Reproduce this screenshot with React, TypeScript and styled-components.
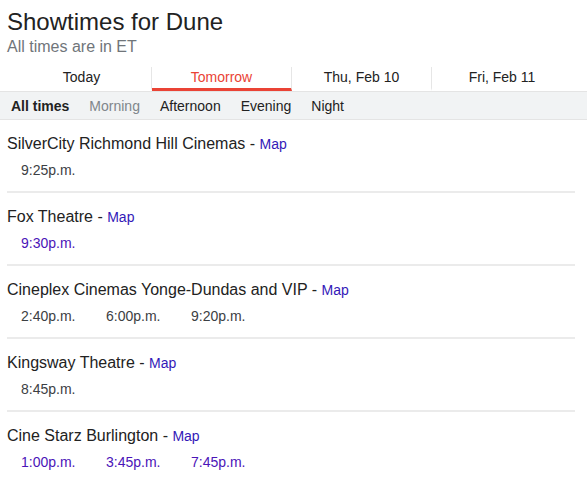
import styled, { createGlobalStyle } from "styled-components";

type Theater = { name: string; times: { t: string; visited?: boolean }[] };

const theaters: Theater[] = [
  { name: "SilverCity Richmond Hill Cinemas", times: [{ t: "9:25p.m." }] },
  { name: "Fox Theatre", times: [{ t: "9:30p.m.", visited: true }] },
  {
    name: "Cineplex Cinemas Yonge-Dundas and VIP",
    times: [{ t: "2:40p.m." }, { t: "6:00p.m." }, { t: "9:20p.m." }],
  },
  { name: "Kingsway Theatre", times: [{ t: "8:45p.m." }] },
  {
    name: "Cine Starz Burlington",
    times: [
      { t: "1:00p.m.", visited: true },
      { t: "3:45p.m.", visited: true },
      { t: "7:45p.m.", visited: true },
    ],
  },
];

const days = ["Today", "Tomorrow", "Thu, Feb 10", "Fri, Feb 11"];
const filters = ["All times", "Morning", "Afternoon", "Evening", "Night"];

export default function App() {
  return (
    <Page>
      <GlobalStyles />
      <Header>
        <Title>Showtimes for Dune</Title>
        <Subtitle>All times are in ET</Subtitle>
      </Header>
      <Tabs>
        {days.map((d, i) => (
          <Tab key={d} $active={i === 1} $last={i === days.length - 1}>
            {d}
          </Tab>
        ))}
      </Tabs>
      <FilterBar>
        {filters.map((f, i) => (
          <Filter key={f} $selected={i === 0} $disabled={i === 1}>
            {f}
          </Filter>
        ))}
      </FilterBar>
      <List>
        {theaters.map((th) => (
          <Row key={th.name}>
            <Name>
              {th.name} - <MapLink>Map</MapLink>
            </Name>
            <Times>
              {th.times.map((x) => (
                <Time key={x.t} $visited={x.visited}>
                  {x.t}
                </Time>
              ))}
            </Times>
          </Row>
        ))}
      </List>
    </Page>
  );
}

const Page = styled.div`
  width: 587px;
  font-family: "Liberation Sans", Arial, sans-serif;
  color: #222;
`;

const Header = styled.div`
  padding: 7px 7px 0;
`;

const Title = styled.h1`
  font-size: 24px;
  font-weight: normal;
  line-height: 29px;
  color: #222;
`;

const Subtitle = styled.div`
  font-size: 16px;
  line-height: 21px;
  color: #70757a;
`;

const Tabs = styled.div`
  display: flex;
  padding: 10px 12px 0;
`;

const Tab = styled.div<{ $active?: boolean; $last?: boolean }>`
  width: 140px;
  box-sizing: border-box;
  text-align: center;
  font-size: 14px;
  line-height: 21px;
  color: ${(p) => (p.$active ? "#ea4335" : "#222")};
  border-right: ${(p) => (p.$last ? "none" : "1px solid #e6e6e6")};
  border-bottom: 3px solid ${(p) => (p.$active ? "#ea4335" : "transparent")};
`;

const FilterBar = styled.div`
  display: flex;
  align-items: center;
  gap: 20px;
  height: 29px;
  box-sizing: border-box;
  padding: 1px 0 0 11px;
  background: #f1f3f4;
  border-top: 1px solid #e4e4e4;
  border-bottom: 1px solid #e4e4e4;
`;

const Filter = styled.span<{ $selected?: boolean; $disabled?: boolean }>`
  font-size: 14px;
  font-weight: ${(p) => (p.$selected ? "bold" : "normal")};
  color: ${(p) => (p.$disabled ? "#80868b" : "#222")};
`;

const List = styled.div`
  padding: 0 12px 0 7px;
`;

const Row = styled.div`
  height: 71px;
  border-bottom: 2px solid #ebebeb;
  &:last-child {
    border-bottom: none;
  }
`;

const Name = styled.div`
  font-size: 16px;
  line-height: 20px;
  padding-top: 14px;
  color: #222;
`;

const MapLink = styled.a`
  font-size: 14px;
  color: #3319b8;
  cursor: pointer;
`;

const Times = styled.div`
  display: flex;
  padding: 6px 0 0 14px;
`;

const Time = styled.span<{ $visited?: boolean }>`
  width: 85px;
  font-size: 14px;
  line-height: 20px;
  color: ${(p) => (p.$visited ? "#4b14b8" : "#3c4043")};
`;

const GlobalStyles = createGlobalStyle`
  * {
    margin: 0;
    padding: 0;
  }
  body {
    background: #fff;
  }
`;
